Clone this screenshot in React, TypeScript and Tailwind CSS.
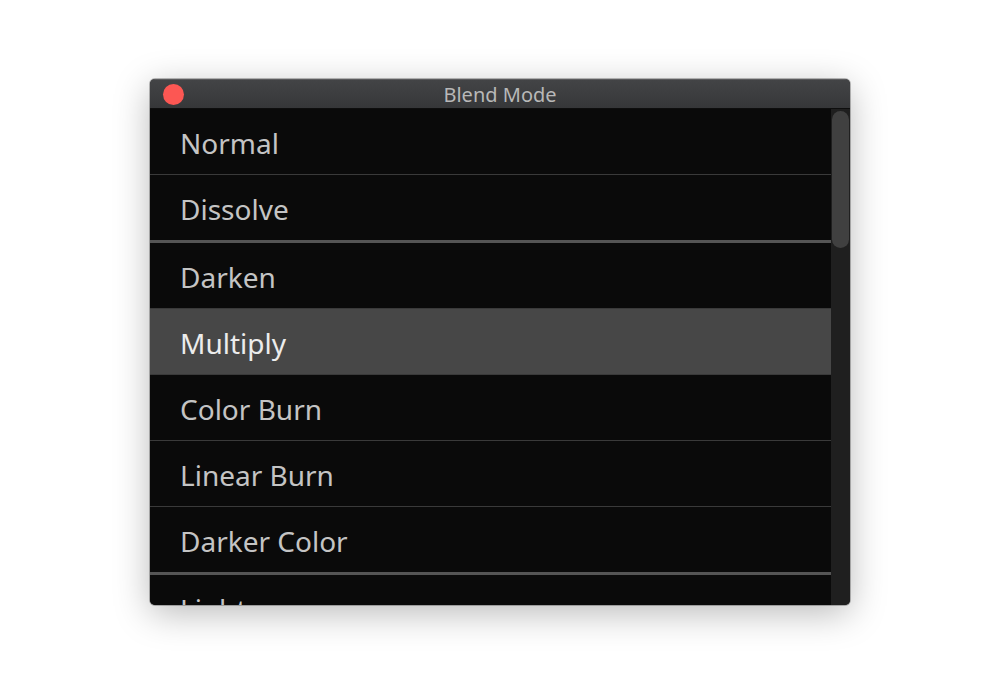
import React from "react";

type Item = { label: string; sep: "thin" | "thick"; selected?: boolean };

const items: Item[] = [
  { label: "Normal", sep: "thin" },
  { label: "Dissolve", sep: "thick" },
  { label: "Darken", sep: "thin" },
  { label: "Multiply", sep: "thin", selected: true },
  { label: "Color Burn", sep: "thin" },
  { label: "Linear Burn", sep: "thin" },
  { label: "Darker Color", sep: "thick" },
  { label: "Lighten", sep: "thin" },
];

export default function App() {
  return (
    <div
      className="w-[1000px] h-[700px] bg-white pt-[79px] pl-[150px]"
      style={{ fontFamily: '"Noto Sans", "Open Sans", sans-serif' }}
    >
      <div className="w-[700px] h-[526px] rounded-[5px] overflow-hidden flex flex-col bg-[#1e1e1e] shadow-[0_8px_36px_rgba(0,0,0,0.28),0_0_0_1px_rgba(0,0,0,0.25)]">
        <div className="relative h-[30px] shrink-0 flex items-center justify-center bg-gradient-to-b from-[#434446] to-[#363739] border-t border-[#5a5a5c] border-b border-b-[#0e0e0e]">
          <div className="absolute left-[13px] top-[4px] w-[21px] h-[21px] rounded-full bg-[#fc5753]" />
          <span className="text-[20px] text-[#b8b8b8] leading-none pt-[1px]">Blend Mode</span>
        </div>
        <div className="flex-1 flex min-h-0">
          <div className="flex-1 flex flex-col overflow-hidden">
            {items.flatMap((it, i) => [
              <div
                key={it.label}
                className={
                  "shrink-0 h-[65px] flex items-center pl-[30px] pt-[3px] text-[28px] leading-none " +
                  (it.selected ? "bg-[#474747] text-[#ececec]" : "bg-[#0a0a0a] text-[#c4c4c4]")
                }
              >
                {it.label}
              </div>,
              <div
                key={"s" + i}
                className={
                  it.sep === "thick"
                    ? "shrink-0 h-[3px] bg-[#555555]"
                    : "shrink-0 h-[1px] bg-[#3a3a3a]"
                }
              />,
            ])}
          </div>
          <div className="w-[19px] shrink-0 bg-[#1f1f1f] pt-[2px] pl-[1px]">
            <div className="w-[17px] h-[137px] rounded-full bg-[#404040]" />
          </div>
        </div>
      </div>
    </div>
  );
}
